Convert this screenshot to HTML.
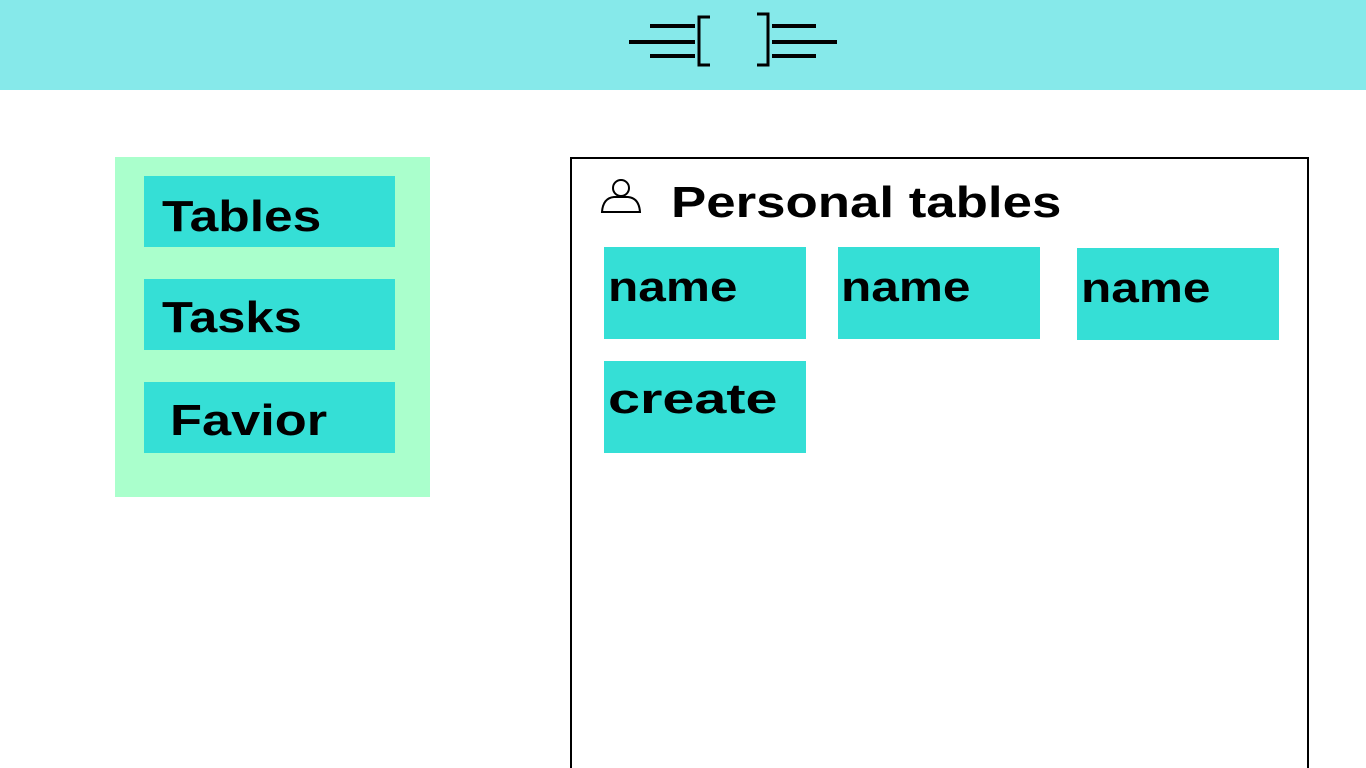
<!DOCTYPE html>
<html><head><style>
*{margin:0;padding:0;box-sizing:border-box}
html,body{width:1366px;height:768px;overflow:hidden}
body{background:#fff;position:relative;font-family:"Liberation Sans",sans-serif;font-weight:bold;color:#000}
.hdr{position:absolute;left:0;top:0;width:1366px;height:90px;background:#86e9ea}
.abs{position:absolute}
.panel{left:115px;top:157px;width:315px;height:340px;background:#aaffcc}
.btn{background:#35dfd6;position:absolute;line-height:1}
.btn span,.t{transform-origin:left center;white-space:nowrap}
.main{left:570px;top:157px;width:739px;height:640px;border:2px solid #000}
</style></head><body>
<div class="hdr">
<svg width="1366" height="90" style="position:absolute;left:0;top:0">
<g stroke="#000" stroke-width="4" fill="none">
<line x1="650" y1="26" x2="695" y2="26"/>
<line x1="629" y1="42" x2="695" y2="42"/>
<line x1="650" y1="56" x2="695" y2="56"/>
<polyline points="710,17 699,17 699,65 710,65" stroke-width="3"/>
<polyline points="757,14 768,14 768,65 757,65" stroke-width="3"/>
<line x1="772" y1="26" x2="816" y2="26"/>
<line x1="772" y1="42" x2="837" y2="42"/>
<line x1="772" y1="56" x2="816" y2="56"/>
</g></svg>
</div>
<div class="abs panel"></div>
<div class="btn" style="left:144px;top:176px;width:251px;height:71px"><span class="abs" style="left:18px;top:19px;font-size:44px;transform:scaleX(1.17)">Tables</span></div>
<div class="btn" style="left:144px;top:279px;width:251px;height:71px"><span class="abs" style="left:18px;top:17px;font-size:44px;transform:scaleX(1.15)">Tasks</span></div>
<div class="btn" style="left:144px;top:382px;width:251px;height:71px"><span class="abs" style="left:26px;top:17px;font-size:44px;transform:scaleX(1.19)">Favior</span></div>
<div class="abs main"></div>
<svg class="abs" style="left:600px;top:176px" width="42" height="40"><g stroke="#000" stroke-width="2" fill="none"><circle cx="21" cy="12" r="8"/><path d="M2 36 Q3 22 14 21 L28 21 Q39 22 40 36 Z"/></g></svg>
<div class="abs t" style="left:671px;top:178px;font-size:44px;transform:scaleX(1.2)">Personal tables</div>
<div class="btn" style="left:604px;top:247px;width:202px;height:92px"><span class="abs" style="left:4px;top:19px;font-size:42px;transform:scaleX(1.18)">name</span></div>
<div class="btn" style="left:838px;top:247px;width:202px;height:92px"><span class="abs" style="left:3px;top:19px;font-size:42px;transform:scaleX(1.18)">name</span></div>
<div class="btn" style="left:1077px;top:248px;width:202px;height:92px"><span class="abs" style="left:4px;top:19px;font-size:42px;transform:scaleX(1.18)">name</span></div>
<div class="btn" style="left:604px;top:361px;width:202px;height:92px"><span class="abs" style="left:4px;top:17px;font-size:42px;transform:scaleX(1.37)">create</span></div>
</body></html>
